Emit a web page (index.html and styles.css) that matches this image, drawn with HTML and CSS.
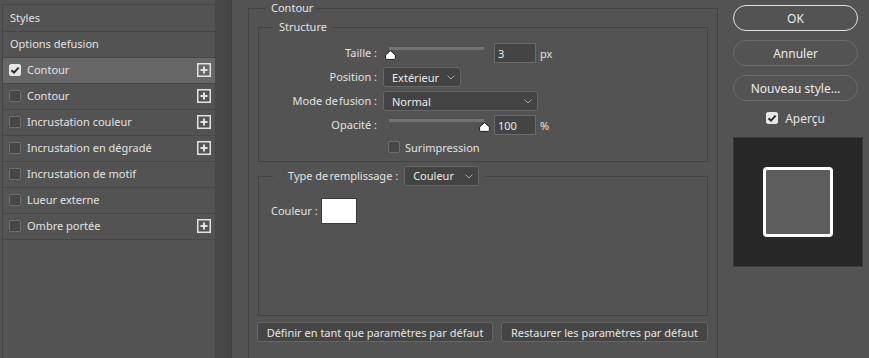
FILE: index.html
```html
<!DOCTYPE html>
<html lang="fr">
<head>
    <meta charset="utf-8">
    <title>Style de calque</title>
    <link rel="stylesheet" href="styles.css">
</head>
<body>
    <div class="side">
        <ul class="style-list">
            <li class="style-item plain">Styles</li>
            <li class="style-item plain">Options defusion</li>
            <li class="style-item active">
                <span class="check on"><svg width="12" height="12" viewBox="0 0 12 12"><path d="M2.5 6.2 L5 8.6 L9.6 3.6" fill="none" stroke="#2b2b2b" stroke-width="2"/></svg></span>
                <span class="item-name">Contour</span>
                <svg class="plus" width="14" height="14" viewBox="0 0 14 14"><rect x="0.75" y="0.75" width="12.5" height="12.5" fill="none" stroke="#e2e2e2" stroke-width="1.5"/><path d="M7 3.5 V10.5 M3.5 7 H10.5" stroke="#e2e2e2" stroke-width="2"/></svg>
            </li>
            <li class="style-item">
                <span class="check"></span>
                <span class="item-name">Contour</span>
                <svg class="plus" width="14" height="14" viewBox="0 0 14 14"><rect x="0.75" y="0.75" width="12.5" height="12.5" fill="none" stroke="#e2e2e2" stroke-width="1.5"/><path d="M7 3.5 V10.5 M3.5 7 H10.5" stroke="#e2e2e2" stroke-width="2"/></svg>
            </li>
            <li class="style-item">
                <span class="check"></span>
                <span class="item-name">Incrustation couleur</span>
                <svg class="plus" width="14" height="14" viewBox="0 0 14 14"><rect x="0.75" y="0.75" width="12.5" height="12.5" fill="none" stroke="#e2e2e2" stroke-width="1.5"/><path d="M7 3.5 V10.5 M3.5 7 H10.5" stroke="#e2e2e2" stroke-width="2"/></svg>
            </li>
            <li class="style-item">
                <span class="check"></span>
                <span class="item-name">Incrustation en dégradé</span>
                <svg class="plus" width="14" height="14" viewBox="0 0 14 14"><rect x="0.75" y="0.75" width="12.5" height="12.5" fill="none" stroke="#e2e2e2" stroke-width="1.5"/><path d="M7 3.5 V10.5 M3.5 7 H10.5" stroke="#e2e2e2" stroke-width="2"/></svg>
            </li>
            <li class="style-item">
                <span class="check"></span>
                <span class="item-name">Incrustation de motif</span>
            </li>
            <li class="style-item">
                <span class="check"></span>
                <span class="item-name">Lueur externe</span>
            </li>
            <li class="style-item">
                <span class="check"></span>
                <span class="item-name">Ombre portée</span>
                <svg class="plus" width="14" height="14" viewBox="0 0 14 14"><rect x="0.75" y="0.75" width="12.5" height="12.5" fill="none" stroke="#e2e2e2" stroke-width="1.5"/><path d="M7 3.5 V10.5 M3.5 7 H10.5" stroke="#e2e2e2" stroke-width="2"/></svg>
            </li>
        </ul>
        <div class="side-strip"></div>
    </div>

    <div class="main">
        <fieldset class="group outer">
            <legend class="group-title">Contour</legend>

            <fieldset class="group inner">
                <legend class="group-title">Structure</legend>
                <div class="form-grid">
                    <span class="label">Taille :</span>
                    <div class="control">
                        <div class="slider">
                            <div class="track"></div>
                            <svg class="thumb" style="left: 2px" width="11" height="10" viewBox="0 0 11 10"><path d="M5.5 0.6 L10.4 5 L10.4 8.2 Q10.4 9.4 9.2 9.4 L1.8 9.4 Q0.6 9.4 0.6 8.2 L0.6 5 Z" fill="#fff" stroke="#1e1e1e" stroke-width="1"/></svg>
                        </div>
                        <input class="num" type="text" value="3">
                        <span class="unit">px</span>
                    </div>

                    <span class="label">Position :</span>
                    <div class="control">
                        <div class="select pos-select">
                            <span>Extérieur</span>
                            <svg width="8" height="5" viewBox="0 0 8 5"><path d="M0.5 0.5 L4 4 L7.5 0.5" fill="none" stroke="#a8a8a8" stroke-width="1"/></svg>
                        </div>
                    </div>

                    <span class="label">Mode de&#8202;fusion :</span>
                    <div class="control">
                        <div class="select mode-select">
                            <span>Normal</span>
                            <svg width="8" height="5" viewBox="0 0 8 5"><path d="M0.5 0.5 L4 4 L7.5 0.5" fill="none" stroke="#a8a8a8" stroke-width="1"/></svg>
                        </div>
                    </div>

                    <span class="label">Opacité :</span>
                    <div class="control">
                        <div class="slider">
                            <div class="track"></div>
                            <svg class="thumb" style="left: 96px" width="11" height="10" viewBox="0 0 11 10"><path d="M5.5 0.6 L10.4 5 L10.4 8.2 Q10.4 9.4 9.2 9.4 L1.8 9.4 Q0.6 9.4 0.6 8.2 L0.6 5 Z" fill="#fff" stroke="#1e1e1e" stroke-width="1"/></svg>
                        </div>
                        <input class="num" type="text" value="100">
                        <span class="unit">%</span>
                    </div>

                    <span></span>
                    <div class="control check-row">
                        <span class="check"></span>
                        <span>Surimpression</span>
                    </div>
                </div>
            </fieldset>

            <fieldset class="group inner fill">
                <legend class="group-title fill-title">
                    <span>Type de&#8202;remplissage :</span>
                    <div class="select fill-select">
                        <span>Couleur</span>
                        <svg width="8" height="5" viewBox="0 0 8 5"><path d="M0.5 0.5 L4 4 L7.5 0.5" fill="none" stroke="#a8a8a8" stroke-width="1"/></svg>
                    </div>
                </legend>
                <div class="fill-body">
                    <span>Couleur :</span>
                    <span class="swatch"></span>
                </div>
            </fieldset>

            <div class="default-buttons">
                <button class="flat-button set-default">Définir en tant que paramètres par défaut</button>
                <button class="flat-button reset-default">Restaurer les paramètres par défaut</button>
            </div>
        </fieldset>
    </div>

    <div class="actions">
        <button class="pill primary">OK</button>
        <button class="pill">Annuler</button>
        <button class="pill">Nouveau style...</button>
        <div class="preview-toggle">
            <span class="check on"><svg width="12" height="12" viewBox="0 0 12 12"><path d="M2.5 6.2 L5 8.6 L9.6 3.6" fill="none" stroke="#2b2b2b" stroke-width="2"/></svg></span>
            <span>Aperçu</span>
        </div>
        <div class="preview">
            <div class="preview-shape"></div>
        </div>
    </div>
</body>
</html>
```

FILE: styles.css
```css
html, body {
    height: 100%;
}

body {
    margin: 0;
    background-color: #535353;
    color: #e2e2e2;
    font-family: "Noto Sans", "DejaVu Sans", sans-serif;
    font-size: 11px;
    display: flex;
    overflow: hidden;
}

/* left list of styles */

.side {
    display: flex;
    width: 232px;
    height: 100%;
    flex-shrink: 0;
}

.style-list {
    list-style: none;
    margin: 4px 0 0 2px;
    padding: 1px 0 0 0;
    width: 212px;
    border-left: 1px solid #464646;
    border-top: 1px solid #464646;
}

.style-item {
    display: flex;
    align-items: center;
    height: 26px;
    box-sizing: border-box;
    padding: 0 4px 2px 6px;
    border-bottom: 1px solid #474747;
    white-space: nowrap;
}

.style-item.plain {
    padding-left: 7px;
}

.style-item.active {
    background-color: #676767;
}

.item-name {
    flex: 1;
    margin-left: 6px;
}

.plus {
    display: block;
}

.side-strip {
    width: 16px;
    background-color: #474747;
    border-right: 1px solid #3e3e3e;
}

.check {
    display: inline-flex;
    width: 12px;
    height: 12px;
    box-sizing: border-box;
    border: 1px solid #6e6e6e;
    border-radius: 2px;
    background-color: #464646;
    flex-shrink: 0;
}

.check.on {
    background-color: #e6e6e6;
    border-color: #e6e6e6;
}

.check.on svg {
    margin: -1px;
}

/* middle settings */

.main {
    margin-left: 16px;
    width: 470px;
    flex-shrink: 0;
}

.group {
    margin: 0;
    padding: 0;
    border: 1px solid #444444;
    min-width: 0;
}

.group-title {
    padding: 0 5px;
    margin-left: 16px;
    line-height: 16px;
}

.outer {
    height: 400px;
    padding: 0 9px;
    border-bottom: none;
}

.outer > .group-title {
    margin-left: 8px;
    padding: 0 3px 0 5px;
}

.inner {
    margin-top: 3px;
}

.inner > .group-title {
    margin-left: 14px;
    padding: 0 5px 0 6px;
}

.form-grid {
    display: grid;
    grid-template-columns: 118px 1fr;
    column-gap: 6px;
    row-gap: 4px;
    padding: 8px 0 6px 0;
}

.label {
    text-align: right;
    line-height: 20px;
    white-space: nowrap;
}

.control {
    display: flex;
    align-items: center;
    height: 20px;
}

.slider {
    position: relative;
    width: 106px;
    height: 20px;
    align-self: flex-start;
}

.track {
    margin: 4px 0 0 6px;
    width: 95px;
    height: 3px;
    background-color: #727272;
}

.thumb {
    position: absolute;
    top: 7px;
}

.num {
    width: 42px;
    height: 20px;
    box-sizing: border-box;
    margin: 0 0 0 5px;
    padding: 0 3px;
    border: 1px solid #6a6a6a;
    background-color: #444444;
    color: #e8e8e8;
    font: inherit;
    outline: none;
}

.unit {
    margin-left: 4px;
}

.select {
    display: flex;
    align-items: center;
    justify-content: space-between;
    height: 20px;
    box-sizing: border-box;
    padding: 0 5px 0 8px;
    border: 1px solid #666666;
    border-radius: 3px;
    background-color: #434343;
    color: #ececec;
}

.pos-select {
    width: 78px;
}

.mode-select {
    width: 155px;
}

.check-row {
    height: 16px;
    padding-left: 5px;
}

.check-row .check {
    margin-right: 5px;
}

.fill {
    margin-top: 4px;
}

.inner > .fill-title {
    display: flex;
    align-items: center;
    padding: 0 6px 0 15px;
    line-height: 20px;
}

.fill-select {
    width: 75px;
    margin-left: 6px;
}

.fill-body {
    display: flex;
    align-items: flex-start;
    height: 129px;
    box-sizing: border-box;
    padding: 12px 0 0 12px;
}

.fill-body > span:first-child {
    line-height: 26px;
}

.swatch {
    width: 36px;
    height: 26px;
    box-sizing: border-box;
    margin-left: 3px;
    background-color: #ffffff;
    border: 1px solid #3a3a3a;
}

.default-buttons {
    display: flex;
    gap: 8px;
    margin: 6px 0 0 -1px;
}

.flat-button {
    height: 20px;
    padding: 0;
    border: 1px solid #666666;
    border-radius: 3px;
    background-color: #454545;
    color: #e6e6e6;
    font: inherit;
}

.set-default {
    width: 236px;
}

.reset-default {
    width: 207px;
}

/* right column */

.actions {
    margin-left: 15px;
    width: 130px;
    flex-shrink: 0;
    display: flex;
    flex-direction: column;
    padding-top: 5px;
}

.pill {
    width: 125px;
    height: 26px;
    margin-bottom: 9px;
    padding: 0;
    border: 1px solid #6b6b6b;
    border-radius: 13px;
    background-color: #535353;
    color: #ececec;
    font-family: inherit;
    font-size: 12px;
}

.pill.primary {
    border: 1.5px solid #e0e0e0;
}

.preview-toggle {
    display: flex;
    align-items: center;
    justify-content: center;
    gap: 7px;
    width: 125px;
    height: 16px;
    font-size: 12px;
}

.preview {
    display: flex;
    align-items: center;
    justify-content: center;
    margin-top: 11px;
    width: 130px;
    height: 130px;
    box-sizing: border-box;
    background-color: #272727;
    border: 1px solid #3c3c3c;
}

.preview-shape {
    width: 70px;
    height: 70px;
    box-sizing: border-box;
    border: 3px solid #ffffff;
    border-radius: 4px;
    background-color: #5d5d5d;
}
```
